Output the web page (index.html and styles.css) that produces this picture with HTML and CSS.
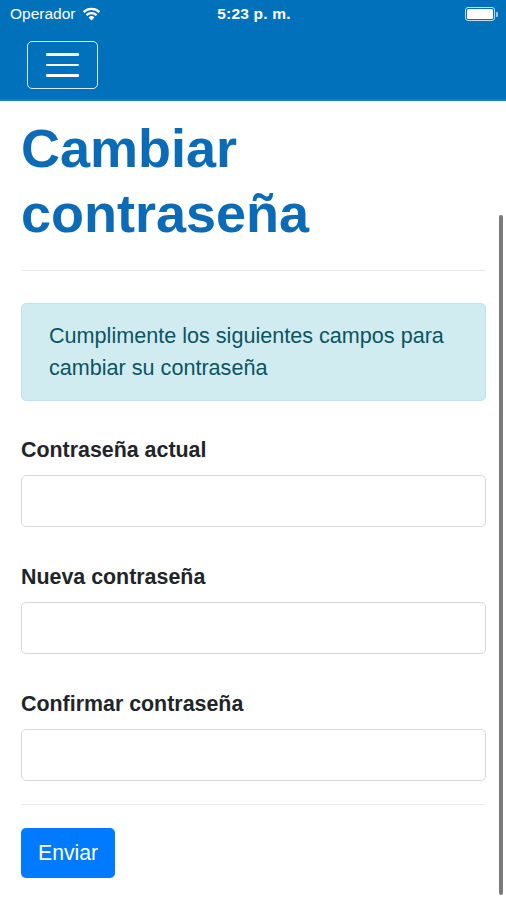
FILE: index.html
```html
<!DOCTYPE html>
<html lang="es">
<head>
  <meta charset="UTF-8">
  <title>Cambiar contraseña</title>
  <link rel="stylesheet" href="styles.css">
</head>
<body>
  <div class="top-bar">
    <div class="status-bar">
      <div class="status-left">
        <span>Operador</span>
        <svg class="wifi" width="19" height="14" viewBox="0 0 19 14">
          <path d="M9.5 13.5 L6.6 10.4 A4.2 4.2 0 0 1 12.4 10.4 Z" fill="#fff"/>
          <path d="M4.4 8.1 A7.4 7.4 0 0 1 14.6 8.1" fill="none" stroke="#fff" stroke-width="2.2"/>
          <path d="M1.6 5.1 A11.4 11.4 0 0 1 17.4 5.1" fill="none" stroke="#fff" stroke-width="2.2"/>
        </svg>
      </div>
      <div class="status-time">5:23 p. m.</div>
      <div class="status-right">
        <div class="battery"><div class="battery-fill"></div></div>
        <div class="battery-nub"></div>
      </div>
    </div>
    <nav class="navbar">
      <button class="navbar-toggler">
        <span class="toggler-line"></span>
        <span class="toggler-line"></span>
        <span class="toggler-line"></span>
      </button>
    </nav>
  </div>

  <div class="container">
    <h1 class="page-title">Cambiar contraseña</h1>
    <hr class="divider divider-top">

    <div class="alert">
      Cumplimente los siguientes campos para cambiar su contraseña
    </div>

    <form class="password-form">
      <div class="form-group">
        <label class="form-label">Contraseña actual</label>
        <input type="password" class="form-control">
      </div>
      <div class="form-group">
        <label class="form-label">Nueva contraseña</label>
        <input type="password" class="form-control">
      </div>
      <div class="form-group">
        <label class="form-label">Confirmar contraseña</label>
        <input type="password" class="form-control">
      </div>
      <hr class="divider divider-bottom">
      <button type="button" class="btn btn-primary">Enviar</button>
    </form>
  </div>

  <!-- indicador de scroll de iOS -->
  <div class="scroll-indicator"></div>
</body>
</html>
```

FILE: styles.css
```css
html, body {
  height: 100%;
}

body {
  margin: 0;
  width: 506px;
  height: 900px;
  overflow: hidden;
  font-family: "Liberation Sans", Arial, sans-serif;
  background: #fff;
  color: #212529;
  position: relative;
}

/* barra superior */
.top-bar {
  background: #0071ba;
  border-bottom: 2px solid #1b7fc4;
  height: 101px;
  box-sizing: border-box;
}

.status-bar {
  display: flex;
  align-items: center;
  justify-content: space-between;
  height: 28px;
  padding: 0 8px 0 10px;
  color: #fff;
  font-size: 15.5px;
}

.status-left {
  display: flex;
  align-items: center;
  gap: 7px;
  width: 150px;
}

.wifi {
  margin-top: -1px;
}

.status-time {
  font-weight: bold;
  font-size: 15.5px;
  letter-spacing: 0.2px;
}

.status-right {
  width: 150px;
  display: flex;
  justify-content: flex-end;
  align-items: center;
}

.battery {
  width: 26px;
  height: 10px;
  border: 1.5px solid rgba(255,255,255,0.75);
  border-radius: 3px;
  padding: 1px;
}

.battery-fill {
  width: 100%;
  height: 100%;
  background: #fff;
  border-radius: 1.5px;
}

.battery-nub {
  width: 2px;
  height: 5px;
  background: rgba(255,255,255,0.6);
  border-radius: 0 1px 1px 0;
  margin-left: 1px;
}

.navbar {
  padding: 13px 27px;
}

.navbar-toggler {
  width: 71px;
  height: 48px;
  box-sizing: border-box;
  background: transparent;
  border: 1.5px solid rgba(255,255,255,0.85);
  border-radius: 5px;
  display: flex;
  flex-direction: column;
  justify-content: center;
  align-items: center;
  gap: 8px;
  padding: 0;
}

.toggler-line {
  display: block;
  width: 33px;
  height: 2.5px;
  background: #fff;
  border-radius: 1px;
}

/* contenido */
.container {
  padding: 0 20px 0 21px;
}

.page-title {
  margin: 15px 0 6px;
  font-size: 54px;
  line-height: 64.8px;
  font-weight: bold;
  color: #0b6bb7;
}

.divider {
  border: 0;
  border-top: 1px solid rgba(0,0,0,0.08);
}

.divider-top {
  margin: 24px 0 32px;
}

.alert {
  background: #d1ecf1;
  border: 1px solid #bee5eb;
  border-radius: 5px;
  color: #0c5460;
  font-size: 21.6px;
  line-height: 32.4px;
  padding: 16px 27px;
}

.password-form {
  margin-top: 33px;
}

.form-group {
  margin-bottom: 34px;
}

.form-label {
  display: block;
  font-size: 21.4px;
  font-weight: bold;
  line-height: 32px;
  margin-bottom: 9px;
  color: #212529;
}

.form-control {
  display: block;
  width: 100%;
  height: 52px;
  box-sizing: border-box;
  border: 1px solid #d6d8da;
  border-radius: 5px;
  background: #fff;
  padding: 8px 16px;
  font-size: 21px;
}

.divider-bottom {
  margin: -11px 0 23px;
}

.btn {
  border: none;
  border-radius: 5px;
  cursor: pointer;
  font-family: inherit;
}

.btn-primary {
  background: #007bff;
  color: #fff;
  font-size: 21.2px;
  height: 50px;
  padding: 0 17px;
}

.scroll-indicator {
  position: absolute;
  left: 499px;
  top: 215px;
  width: 3.5px;
  height: 680px;
  background: #7a7a7a;
  border-radius: 2px;
}
```
